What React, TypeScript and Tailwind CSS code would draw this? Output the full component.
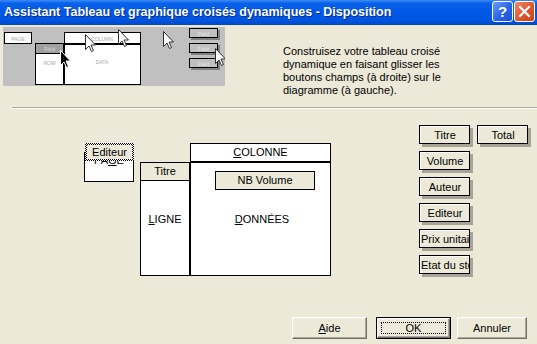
import React from "react";

function Cursor({ x, y, dark }: { x: number; y: number; dark?: boolean }) {
  return (
    <path
      transform={`translate(${x} ${y})`}
      d="M0.5 0.5 L0.5 15.5 L4 12 L6.5 17.5 L8.5 16.5 L6 11 L10.5 11 Z"
      fill={dark ? "#000" : "#fff"}
      stroke={dark ? "#fff" : "#303030"}
      strokeWidth="1"
    />
  );
}

function Preview() {
  const btnYs = [1, 16, 31];
  return (
    <svg width="222" height="59" viewBox="0 0 222 59" className="block">
      <rect width="222" height="59" fill="#c0c0c0" />
      <rect x="1.5" y="5.5" width="27" height="11" fill="#fff" stroke="#000" />
      <text x="15" y="13.5" fontSize="5" fill="#a8a8a8" textAnchor="middle" fontFamily="Liberation Sans, sans-serif">PAGE</text>
      <rect x="32.5" y="16.5" width="28" height="41" fill="#fff" stroke="#000" />
      <rect x="33" y="17" width="27" height="9" fill="#a0a0a0" />
      <line x1="33" y1="26.5" x2="60" y2="26.5" stroke="#000" />
      <text x="46.5" y="24" fontSize="5" fill="#d8d8d8" textAnchor="middle" fontFamily="Liberation Sans, sans-serif">Field</text>
      <text x="46.5" y="38" fontSize="5" fill="#a8a8a8" textAnchor="middle" fontFamily="Liberation Sans, sans-serif">ROW</text>
      <rect x="61.5" y="5.5" width="76" height="11" fill="#fff" stroke="#000" />
      <text x="99" y="13.5" fontSize="5" fill="#a8a8a8" textAnchor="middle" fontFamily="Liberation Sans, sans-serif">COLUMN</text>
      <rect x="61.5" y="17.5" width="76" height="40" fill="#fff" stroke="#000" />
      <text x="99" y="37" fontSize="5" fill="#a8a8a8" textAnchor="middle" fontFamily="Liberation Sans, sans-serif">DATA</text>
      {btnYs.map((by) => (
        <g key={by}>
          <rect x="188" y={by + 2} width="29" height="10" fill="#808080" />
          <rect x="186.5" y={by + 0.5} width="28" height="9" fill="#c0c0c0" stroke="#000" />
          <text x="200.5" y={by + 7.5} fontSize="5" fill="#e8e8e8" textAnchor="middle" fontFamily="Liberation Sans, sans-serif">Field</text>
        </g>
      ))}
      <Cursor x={82} y={7} />
      <Cursor x={115} y={2} />
      <Cursor x={160} y={4} />
      <Cursor x={57} y={23} dark />
      <Cursor x={212} y={21} />
    </svg>
  );
}

function FieldBtn({ label }: { label: string }) {
  return (
    <div className="w-[51px] h-[19px] border border-black bg-[#ece9d8] shadow-[3px_3px_0_#a7a396] overflow-hidden">
      <div className="h-full w-full border-t border-l border-white text-center whitespace-nowrap overflow-hidden leading-[16px] text-[11px]">
        {label}
      </div>
    </div>
  );
}

function ClassicBtn({ w, children, def }: { w: string; children: React.ReactNode; def?: boolean }) {
  const inner = (
    <div className="relative h-full w-full border border-t-white border-l-white border-r-[#716f64] border-b-[#716f64] shadow-[inset_-1px_-1px_0_#aca899,inset_1px_1px_0_#f1efe2] bg-[#ece9d8] flex items-center justify-center text-[11px]">
      {children}
      {def && <div className="absolute inset-[3px] border border-dotted border-black" />}
    </div>
  );
  return def ? (
    <div className={`border border-black h-[22px] ${w}`}>{inner}</div>
  ) : (
    <div className={`h-[22px] ${w}`}>{inner}</div>
  );
}

export default function App() {
  return (
    <div className="w-[537px] h-[344px] overflow-hidden bg-[#ece9d8] flex flex-col font-['Liberation_Sans',Arial,sans-serif] text-black">
      {/* Title bar */}
      <div className="h-[25px] shrink-0 flex items-start bg-[linear-gradient(to_bottom,#3d8ef8_0%,#0a62ea_12%,#0058e6_45%,#0055e0_80%,#0048cc_100%)]">
        <div className="ml-[4px] mt-[4px] text-white font-bold text-[12.5px] leading-[16px] whitespace-nowrap [text-shadow:1px_1px_0_#0a2a8a]">
          Assistant Tableau et graphique croisés dynamiques - Disposition
        </div>
        <div className="ml-auto mt-[1px] flex gap-[1px] mr-[2px]">
          <div className="w-[21px] h-[21px] rounded-[3px] border border-white bg-[linear-gradient(135deg,#6a9ef8_0%,#2a64e8_55%,#1a4fd8_100%)] flex items-center justify-center text-white font-bold text-[15px] leading-none">
            ?
          </div>
          <div className="w-[21px] h-[21px] rounded-[3px] border border-white bg-[linear-gradient(135deg,#f08a68_0%,#e0552c_55%,#c8401c_100%)] flex items-center justify-center">
            <svg width="13" height="13" viewBox="0 0 13 13">
              <path d="M2 2 L11 11 M11 2 L2 11" stroke="#fff" strokeWidth="2.2" strokeLinecap="square" />
            </svg>
          </div>
        </div>
      </div>

      {/* Top section */}
      <div className="h-[82px] shrink-0 flex items-start">
        <div className="ml-[3px] mt-[2px]">
          <Preview />
        </div>
        <div className="ml-[58px] mt-[20px] text-[11px] leading-[13px] whitespace-nowrap">
          Construisez votre tableau croisé
          <br />
          dynamique en faisant glisser les
          <br />
          boutons champs (à droite) sur le
          <br />
          diagramme (à gauche).
        </div>
      </div>

      {/* Separator */}
      <div className="ml-[12px] h-[2px] shrink-0 border-t border-[#aca899] border-b border-b-white" />

      {/* Main area */}
      <div className="h-[208px] shrink-0 flex items-start text-[11px]">
        {/* PAGE */}
        <div className="relative ml-[84px] mt-[43px] w-[50px] h-[30px] border border-black bg-white">
          <div className="text-center leading-[13px] pt-px">
            PA<span className="underline underline-offset-1">G</span>E
          </div>
          <div className="absolute left-0 top-[-10px] w-[49px] h-[18px] p-[2px] bg-[image:repeating-conic-gradient(#000_0%_25%,#fff_0%_50%)] bg-[length:2px_2px]">
            <div className="h-full w-full bg-[#ece9d8] text-center leading-[14px]">Editeur</div>
          </div>
        </div>

        {/* LIGNE */}
        <div className="ml-[6px] mt-[53px] w-[50px] h-[114px] border border-black bg-white flex flex-col">
          <div className="h-[18px] border-b border-black bg-[#ece9d8] text-center leading-[17px]">Titre</div>
          <div className="pt-[32px] text-center leading-[13px]">
            <span className="underline underline-offset-1">L</span>IGNE
          </div>
        </div>

        {/* COLONNE + DONNEES */}
        <div className="mt-[34px] w-[141px] flex flex-col">
          <div className="h-[19px] border border-black bg-white text-center leading-[17px]">
            <span className="underline underline-offset-1">C</span>OLONNE
          </div>
          <div className="h-[114px] border border-black bg-white flex flex-col">
            <div className="ml-[24px] mt-[8px] w-[100px] h-[19px] border border-black bg-[#ece9d8] text-center leading-[17px]">
              NB Volume
            </div>
            <div className="mt-[23px] text-center leading-[13px] pl-[3px]">
              <span className="underline underline-offset-1">D</span>ONNÉES
            </div>
          </div>
        </div>

        {/* Fields */}
        <div className="ml-[88px] mt-[16px] grid grid-cols-[51px_51px] gap-x-[7px] gap-y-[7px]">
          <FieldBtn label="Titre" />
          <FieldBtn label="Total" />
          <FieldBtn label="Volume" />
          <div />
          <FieldBtn label="Auteur" />
          <div />
          <FieldBtn label="Editeur" />
          <div />
          <FieldBtn label="Prix unitaire" />
          <div />
          <FieldBtn label="Etat du stock" />
          <div />
        </div>
      </div>

      {/* Bottom buttons */}
      <div className="flex items-start">
        <div className="ml-[292px]">
          <ClassicBtn w="w-[75px]">
            <span>
              <span className="underline underline-offset-1">A</span>ide
            </span>
          </ClassicBtn>
        </div>
        <div className="ml-[9px]">
          <ClassicBtn w="w-[75px]" def>
            OK
          </ClassicBtn>
        </div>
        <div className="ml-[6px]">
          <ClassicBtn w="w-[70px]">Annuler</ClassicBtn>
        </div>
      </div>
    </div>
  );
}
